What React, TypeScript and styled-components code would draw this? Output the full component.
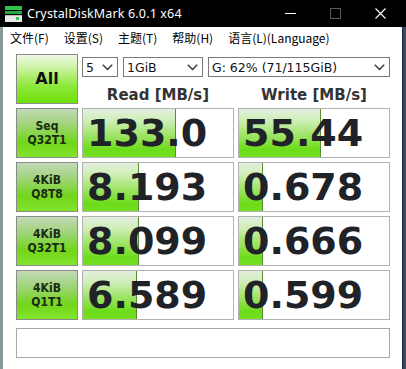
import React from "react";
import styled, { createGlobalStyle } from "styled-components";

const Global = createGlobalStyle`
  html, body { margin: 0; padding: 0; overflow: hidden; }
  body { background: #3b4a58; }
`;

const Frame = styled.div`
  width: 406px;
  height: 369px;
  display: flex;
  flex-direction: column;
  background: linear-gradient(90deg, #8a9a9c 0, #8a9a9c 3px, #3b4a58 3px);
`;

const TitleBar = styled.div`
  height: 27px;
  flex: none;
  background: #000;
  display: flex;
  align-items: center;
  padding: 0 3px 0 5px;
  color: #fff;
  font-family: "Noto Sans", "Open Sans", sans-serif;
  font-size: 12.5px;
`;

const TitleText = styled.span`
  margin-left: 5px;
  flex: 1;
  letter-spacing: 0.15px;
`;

const CtrlButton = styled.div`
  width: 45px;
  height: 27px;
  display: flex;
  align-items: center;
  justify-content: center;
`;

const Client = styled.div`
  flex: 1;
  margin: 0 3px 4px 3px;
  background: #fff;
  border-right: 1px solid #16264a;
  border-bottom: 1px solid #1b2228;
  display: flex;
  flex-direction: column;
`;

const MenuBar = styled.div`
  height: 20px;
  display: flex;
  align-items: center;
  gap: 15px;
  padding-left: 7px;
  font-family: "Noto Sans CJK SC", "Noto Sans", sans-serif;
  font-size: 12px;
  color: #000;
`;

const Main = styled.div`
  padding: 7px 0 0 13px;
  display: grid;
  grid-template-columns: 62px 152px 152px;
  grid-auto-rows: 50px;
  column-gap: 4px;
  row-gap: 4px;
`;

const GreenButton = styled.div<{ $big?: boolean }>`
  box-sizing: border-box;
  border: 1px solid #8a8a8a;
  display: flex;
  flex-direction: column;
  align-items: center;
  justify-content: center;
  font-family: ${(p) =>
    p.$big ? `"DejaVu Sans", Verdana, sans-serif` : `"DejaVu Sans Condensed", "DejaVu Sans", Verdana, sans-serif`};
  font-stretch: ${(p) => (p.$big ? "normal" : "semi-condensed")};
  font-weight: bold;
  color: ${(p) => (p.$big ? "#111" : "#1a2a14")};
  font-size: ${(p) => (p.$big ? "16px" : "12px")};
  line-height: ${(p) => (p.$big ? "18px" : "14px")};
  background: ${(p) =>
    p.$big
      ? "linear-gradient(#eef9e6 0%, #c6f29a 30%, #8ce83a 65%, #6ee00c 100%)"
      : "linear-gradient(#c2d9b6 0%, #a2d47e 30%, #72d61a 70%, #82e42e 100%)"};
`;

const TopRight = styled.div`
  grid-column: 2 / 4;
  display: flex;
  flex-direction: column;
`;

const SelectRow = styled.div`
  margin-top: 3px;
  display: flex;
  gap: 5px;
`;

const FakeSelect = styled.div<{ $w: number }>`
  box-sizing: border-box;
  width: ${(p) => p.$w}px;
  height: 20px;
  border: 1px solid #7a7a7a;
  background: #fff;
  display: flex;
  align-items: center;
  justify-content: space-between;
  padding: 0 4px 0 3px;
  font-family: "DejaVu Sans", Verdana, sans-serif;
  font-size: 12.5px;
  color: #111;
`;

const Headers = styled.div`
  margin-top: 9px;
  display: grid;
  grid-template-columns: 152px 152px;
  column-gap: 4px;
`;

const Header = styled.div`
  text-align: center;
  font-family: "DejaVu Sans", Verdana, sans-serif;
  font-weight: bold;
  font-size: 15px;
  line-height: 18px;
  color: #333;
`;

const ResultBox = styled.div`
  position: relative;
  box-sizing: border-box;
  border: 1px solid #b2b2b2;
  background: #fff;
  display: flex;
  align-items: center;
  padding-left: 4px;
  overflow: hidden;
`;

const Bar = styled.div`
  position: absolute;
  left: 0;
  top: 0;
  bottom: 0;
  box-sizing: border-box;
  border-right: 1px solid #5b8a34;
  background: linear-gradient(#e4efe0 0%, #cdeeb4 25%, #9ee466 55%, #6cdc18 85%, #74e024 100%);
`;

const Value = styled.span`
  position: relative;
  font-family: "DejaVu Sans", Verdana, sans-serif;
  font-weight: bold;
  font-size: 38px;
  line-height: 1;
  color: #1f2227;
`;

const Comment = styled.div`
  grid-column: 1 / 4;
  margin-top: 4px;
  height: 30px;
  box-sizing: border-box;
  border: 1px solid #a8a8a8;
  background: #fff;
`;

const Chevron = () => (
  <svg width="11" height="7" viewBox="0 0 11 7">
    <polyline points="0.8,0.8 5.5,5.5 10.2,0.8" fill="none" stroke="#333" strokeWidth="1.4" />
  </svg>
);

const AppIcon = () => (
  <svg width="17" height="16" viewBox="0 0 17 16">
    <rect x="0" y="0" width="17" height="4" fill="#2fc24a" />
    <rect x="0" y="5" width="17" height="3" fill="#26a83e" />
    <rect x="0" y="9" width="17" height="7" fill="#e8ece8" />
    <rect x="0" y="9" width="17" height="1" fill="#b8c0b8" />
    <rect x="11" y="11" width="3" height="3" fill="#35c84e" />
  </svg>
);

const rows = [
  { l1: "Seq", l2: "Q32T1", read: "133.0", rw: 93, write: "55.44", ww: 82 },
  { l1: "4KiB", l2: "Q8T8", read: "8.193", rw: 56, write: "0.678", ww: 24 },
  { l1: "4KiB", l2: "Q32T1", read: "8.099", rw: 56, write: "0.666", ww: 24 },
  { l1: "4KiB", l2: "Q1T1", read: "6.589", rw: 54, write: "0.599", ww: 24 },
];

export default function App() {
  return (
    <>
      <Global />
      <Frame>
        <TitleBar>
          <AppIcon />
          <TitleText>CrystalDiskMark 6.0.1 x64</TitleText>
          <CtrlButton>
            <svg width="11" height="2" viewBox="0 0 11 2">
              <rect x="0" y="0" width="11" height="1" fill="#fff" />
            </svg>
          </CtrlButton>
          <CtrlButton>
            <svg width="11" height="11" viewBox="0 0 11 11">
              <rect x="0.5" y="0.5" width="10" height="10" fill="none" stroke="#5a5a5a" />
            </svg>
          </CtrlButton>
          <CtrlButton>
            <svg width="11" height="11" viewBox="0 0 11 11">
              <path d="M0.5 0.5 L10.5 10.5 M10.5 0.5 L0.5 10.5" stroke="#fff" strokeWidth="1.1" />
            </svg>
          </CtrlButton>
        </TitleBar>
        <Client>
          <MenuBar>
            <span>文件(F)</span>
            <span>设置(S)</span>
            <span>主题(T)</span>
            <span>帮助(H)</span>
            <span>语言(L)(Language)</span>
          </MenuBar>
          <Main>
            <GreenButton $big>All</GreenButton>
            <TopRight>
              <SelectRow>
                <FakeSelect $w={36}>
                  <span>5</span>
                  <Chevron />
                </FakeSelect>
                <FakeSelect $w={80}>
                  <span>1GiB</span>
                  <Chevron />
                </FakeSelect>
                <FakeSelect $w={182}>
                  <span>G: 62% (71/115GiB)</span>
                  <Chevron />
                </FakeSelect>
              </SelectRow>
              <Headers>
                <Header>Read [MB/s]</Header>
                <Header>Write [MB/s]</Header>
              </Headers>
            </TopRight>
            {rows.map((r, i) => (
              <React.Fragment key={i}>
                <GreenButton>
                  <span>{r.l1}</span>
                  <span>{r.l2}</span>
                </GreenButton>
                <ResultBox>
                  <Bar style={{ width: r.rw }} />
                  <Value>{r.read}</Value>
                </ResultBox>
                <ResultBox>
                  <Bar style={{ width: r.ww }} />
                  <Value>{r.write}</Value>
                </ResultBox>
              </React.Fragment>
            ))}
            <Comment />
          </Main>
        </Client>
      </Frame>
    </>
  );
}
